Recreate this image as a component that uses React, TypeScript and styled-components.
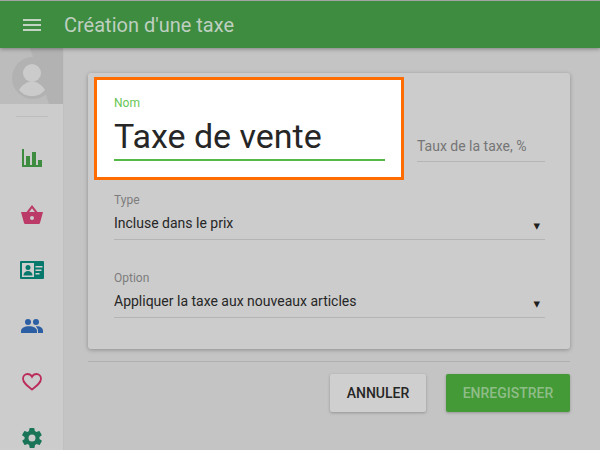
import React from "react";
import styled, { createGlobalStyle } from "styled-components";

const Global = createGlobalStyle`
  html, body { margin: 0; padding: 0; background: #c4c4c4; }
  body { font-family: Roboto, "Liberation Sans", sans-serif; }
  * { box-sizing: border-box; }
`;

const Page = styled.div`
  width: 600px;
  height: 450px;
  overflow: hidden;
  display: flex;
  flex-direction: column;
  background: #c4c4c4;
`;

const TopBar = styled.header`
  height: 48px;
  flex: none;
  display: flex;
  align-items: center;
  background: #3d8c40;
  border-top: 1px solid #a3a3a3;
  box-shadow: 0 1px 4px rgba(0, 0, 0, 0.35);
  position: relative;
  z-index: 2;
`;

const Burger = styled.svg`
  width: 18px;
  height: 12px;
  margin-left: 23px;
  margin-right: 23px;
  flex: none;
`;

const Title = styled.h1`
  margin: 0;
  font-size: 20px;
  font-weight: 400;
  color: #bfcfc0;
`;

const Body = styled.div`
  flex: 1;
  display: flex;
  min-height: 0;
`;

const Sidebar = styled.nav`
  width: 64px;
  flex: none;
  background: #cccccc;
  border-right: 1px solid #c0c0c0;
  display: flex;
  flex-direction: column;
  align-items: center;
`;

const Avatar = styled.svg`
  width: 63px;
  height: 56px;
  flex: none;
  display: block;
`;

const SideRule = styled.div`
  width: 32px;
  height: 1px;
  margin-top: 12px;
  margin-bottom: 13px;
  background: #bdbdbd;
  flex: none;
`;

const NavItem = styled.div`
  height: 56px;
  width: 100%;
  flex: none;
  display: flex;
  align-items: center;
  justify-content: center;
`;

const Main = styled.main`
  flex: 1;
  padding: 25px 30px 0 24px;
  display: flex;
  flex-direction: column;
`;

const Card = styled.section`
  height: 276px;
  flex: none;
  background: #cccccc;
  border-radius: 3px;
  box-shadow: 0 1px 4px rgba(0, 0, 0, 0.28);
  padding: 4px 25px 0 6px;
  display: flex;
  flex-direction: column;
`;

const TopRow = styled.div`
  display: flex;
  align-items: flex-start;
  height: 103px;
  flex: none;
`;

const NameHighlight = styled.div`
  width: 310px;
  height: 103px;
  flex: none;
  background: #ffffff;
  border: 3px solid #ff6d00;
  padding: 16px 16px 0 17px;
  display: flex;
  flex-direction: column;
`;

const NameLabel = styled.label`
  font-size: 12px;
  line-height: 14px;
  color: #66c653;
`;

const NameInput = styled.div`
  font-size: 34px;
  line-height: 40px;
  height: 45px;
  margin-top: 6px;
  color: #262626;
  border-bottom: 2px solid #55b947;
`;

const RateField = styled.div`
  margin-left: 13px;
  margin-top: 59px;
  flex: 1;
  height: 26px;
  font-size: 14px;
  line-height: 20px;
  color: #757575;
  border-bottom: 1px solid #b4b4b4;
`;

const SelectField = styled.div<{ $top: number }>`
  margin-top: ${(p) => p.$top}px;
  margin-left: 20px;
  flex: none;
`;

const SelectLabel = styled.label`
  display: block;
  font-size: 12px;
  line-height: 14px;
  color: #7d7d7d;
`;

const SelectValue = styled.div`
  height: 30px;
  margin-top: 3px;
  padding-top: 3px;
  font-size: 14px;
  line-height: 20px;
  color: #262626;
  border-bottom: 1px solid #b4b4b4;
  display: flex;
  justify-content: space-between;
`;

const Caret = styled.span`
  font-size: 13px;
  line-height: 26px;
  margin-right: 5px;
  color: #1f1f1f;
  font-family: "DejaVu Sans", sans-serif;
`;

const Rule = styled.hr`
  width: 100%;
  height: 1px;
  margin: 12px 0 12px;
  border: 0;
  flex: none;
  background: #b0b0b0;
`;

const Actions = styled.div`
  display: flex;
  justify-content: flex-end;
  gap: 20px;
`;

const Button = styled.button<{ $primary?: boolean }>`
  height: 38px;
  width: ${(p) => (p.$primary ? 124 : 96)}px;
  border: 0;
  border-radius: 2px;
  padding: 0;
  font-family: inherit;
  font-size: 14px;
  font-weight: 500;
  background: ${(p) => (p.$primary ? "#439a37" : "#cfcfcf")};
  color: ${(p) => (p.$primary ? "#8fbd88" : "#262626")};
  box-shadow: 0 1px 3px rgba(0, 0, 0, 0.25);
`;

const Icon = styled.svg<{ $w: number; $h: number }>`
  width: ${(p) => p.$w}px;
  height: ${(p) => p.$h}px;
  display: block;
`;

export default function App() {
  return (
    <Page>
      <Global />
      <TopBar>
        <Burger viewBox="0 0 18 12">
          <path d="M0 0h18v2H0zM0 5h18v2H0zM0 10h18v2H0z" fill="#c3d3c4" />
        </Burger>
        <Title>Création d'une taxe</Title>
      </TopBar>
      <Body>
        <Sidebar>
          <Avatar viewBox="0 0 63 56">
            <rect width="63" height="56" fill="#bcbcbc" />
            <path d="M30 0H63V56H49z" fill="#b2b2b2" />
            <circle cx="33" cy="30" r="21" fill="#b2b2b2" />
            <circle cx="32" cy="25" r="9" fill="#cbcbcb" />
            <path d="M19 42C22 37 27 33.500 32 33.500S42 37 45 42C41 46.500 37 48 32 48S23 46.500 19 42z" fill="#cbcbcb" />
          </Avatar>
          <SideRule />
          <NavItem>
            <Icon $w={20} $h={18} viewBox="0 0 20 18">
              <path d="M0 0h2v16h2V7h4v9h2V3h4v13h2v-5h4v7H0z" fill="#3d8c40" />
            </Icon>
          </NavItem>
          <NavItem>
            <Icon $w={22} $h={19} viewBox="0 0 22 19">
              <path d="M11 0l5.500 7H22l-3 11a1.500 1.500 0 0 1-1.500 1h-13A1.500 1.500 0 0 1 3 18L0 7h5.500z" fill="#bb3a67" />
              <path d="M11 3.200L8.200 7h5.600z" fill="#cccccc" />
              <circle cx="11" cy="13" r="2" fill="#cccccc" />
            </Icon>
          </NavItem>
          <NavItem>
            <Icon $w={24} $h={18} viewBox="0 0 24 18">
              <rect width="24" height="18" rx="1" fill="#07796c" />
              <rect x="2" y="2" width="12" height="14" fill="#cfcfcf" />
              <circle cx="8" cy="6.500" r="2.500" fill="#07796c" />
              <path d="M3.500 14.500c0-3 2-4.500 4.500-4.500s4.500 1.500 4.500 4.500z" fill="#07796c" />
              <path d="M15.500 5h7v1.500h-7zM15.500 8.500h6v1.500h-6zM15.500 12h4v1.500h-4z" fill="#cfcfcf" />
            </Icon>
          </NavItem>
          <NavItem>
            <Icon $w={22} $h={14} viewBox="0 0 22 14">
              <circle cx="7" cy="3" r="3" fill="#2b5ea3" />
              <circle cx="15" cy="3" r="3" fill="#2b5ea3" />
              <path d="M0 14v-2c0-3 3.500-4.800 8-4.800s8 1.800 8 4.800v2z" fill="#2b5ea3" />
              <path d="M17 14v-2c0-2-.8-3.500-2.200-4.600C19 7 22 9 22 12v2z" fill="#2b5ea3" />
            </Icon>
          </NavItem>
          <NavItem>
            <Icon $w={20} $h={18} viewBox="0 0 20 18">
              <path d="M10 16.500C5 12.500 1 9.500 1 5.700 1 3 3 1 5.500 1 7.500 1 9 2 10 3.800 11 2 12.500 1 14.500 1 17 1 19 3 19 5.700c0 3.800-4 6.800-9 10.800z" fill="none" stroke="#bb2c5a" strokeWidth="1.800" />
            </Icon>
          </NavItem>
          <NavItem>
            <Icon $w={24} $h={24} viewBox="0 0 24 24">
              <path d="M19.400 13a7.600 7.600 0 0 0 0-2l2.100-1.600a.5.500 0 0 0 .1-.6l-2-3.500a.5.500 0 0 0-.6-.2l-2.500 1a7.300 7.300 0 0 0-1.700-1l-.4-2.700a.5.500 0 0 0-.5-.4h-4a.5.500 0 0 0-.5.400l-.4 2.700a7.300 7.300 0 0 0-1.700 1l-2.500-1a.5.500 0 0 0-.6.200l-2 3.500a.5.500 0 0 0 .1.600L4.600 11a7.600 7.600 0 0 0 0 2l-2.100 1.600a.5.500 0 0 0-.1.600l2 3.500c.1.200.4.300.6.200l2.500-1c.5.400 1.100.7 1.700 1l.4 2.700c0 .2.300.4.500.4h4c.2 0 .5-.2.500-.4l.4-2.700c.6-.3 1.200-.6 1.700-1l2.500 1c.2.100.5 0 .6-.2l2-3.500a.5.500 0 0 0-.1-.6zM12 15.500a3.500 3.500 0 1 1 0-7 3.500 3.500 0 0 1 0 7z" fill="#1a7558" />
            </Icon>
          </NavItem>
        </Sidebar>
        <Main>
          <Card>
            <TopRow>
              <NameHighlight>
                <NameLabel>Nom</NameLabel>
                <NameInput>Taxe de vente</NameInput>
              </NameHighlight>
              <RateField>Taux de la taxe, %</RateField>
            </TopRow>
            <SelectField $top={13}>
              <SelectLabel>Type</SelectLabel>
              <SelectValue>
                Incluse dans le prix
                <Caret>▾</Caret>
              </SelectValue>
            </SelectField>
            <SelectField $top={31}>
              <SelectLabel>Option</SelectLabel>
              <SelectValue>
                Appliquer la taxe aux nouveaux articles
                <Caret>▾</Caret>
              </SelectValue>
            </SelectField>
          </Card>
          <Rule />
          <Actions>
            <Button>ANNULER</Button>
            <Button $primary>ENREGISTRER</Button>
          </Actions>
        </Main>
      </Body>
    </Page>
  );
}
